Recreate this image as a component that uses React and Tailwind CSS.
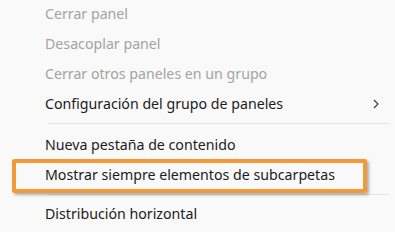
export default function App() {
  const font = { fontFamily: '"Segoe UI", "Noto Sans", sans-serif' };
  return (
    <div className="relative w-[395px] h-[232px] overflow-hidden bg-[#f9f9f9] text-[14.2px]" style={font}>
      <div className="flex flex-col">
        <div className="h-[30px] flex items-center pl-[45px] pb-[2px] text-[#a3a3a3]">Cerrar panel</div>
        <div className="h-[30px] flex items-center pl-[45px] pb-[2px] text-[#a3a3a3]">Desacoplar panel</div>
        <div className="h-[30px] flex items-center pl-[45px] pb-[2px] text-[#a3a3a3]">Cerrar otros paneles en un grupo</div>
        <div className="h-[30px] flex items-center justify-between pl-[45px] pb-[2px] pr-[16px] text-[#1b1b1b]">
          <span>Configuración del grupo de paneles</span>
          <svg width="6" height="10" viewBox="0 0 6 10">
            <path d="M1 1 L5 5 L1 9" fill="none" stroke="#404040" strokeWidth="1.2" />
          </svg>
        </div>
        <div className="pt-[3px] pb-[6px] pl-[48px] pr-[6px]">
          <div className="h-px bg-[#e2e2e2]" />
        </div>
        <div className="h-[31px] flex items-center pl-[45px] pb-[2px] text-[#1b1b1b]">Nueva pestaña de contenido</div>
        <div className="h-[30px] flex items-center pl-[45px] pb-[2px] text-[#1b1b1b]">Mostrar siempre elementos de subcarpetas</div>
        <div className="pt-[3px] pb-[5px] pl-[48px] pr-[6px]">
          <div className="h-px bg-[#e2e2e2]" />
        </div>
        <div className="h-[30px] flex items-center pl-[45px] pb-[2px] text-[#1b1b1b]">Distribución horizontal</div>
      </div>
      <div className="absolute left-[12px] top-[159px] w-[355px] h-[34px] border-[4px] border-[#f39a38] rounded-[2px] shadow-[2px_2px_3px_rgba(0,0,0,0.3)]" />
    </div>
  );
}
